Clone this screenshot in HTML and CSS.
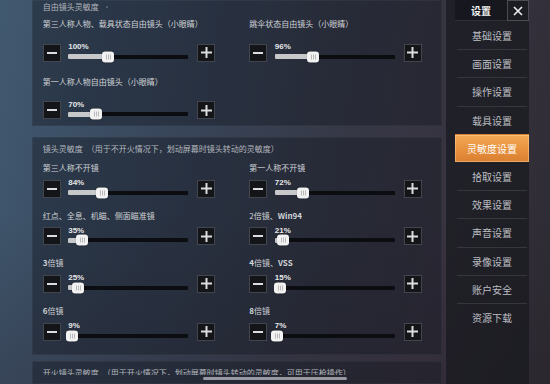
FILE: index.html
```html
<!DOCTYPE html>
<html lang="zh-CN">
<head>
<meta charset="utf-8">
<title>灵敏度设置</title>
<link rel="stylesheet" href="styles.css">
</head>
<body>
<div class="screen">
  <main class="content">
    <section class="panel panel-free">
      <div class="panel-title">自由镜头灵敏度<span class="dot"></span></div>
      <div class="grid">
        <div class="item">
          <div class="label">第三人称人物、载具状态自由镜头（小眼睛）</div>
          <div class="ctrl">
            <div class="step"><svg viewBox="0 0 10 10" width="10" height="10"><rect y="4" width="10" height="2"/></svg></div>
            <div class="slider" style="--p:33.3%"><span class="pct">100%</span><div class="track"><div class="fill"></div><div class="knob"></div></div></div>
            <div class="step"><svg viewBox="0 0 11 11" width="11" height="11"><rect y="4.5" width="11" height="2"/><rect x="4.5" width="2" height="11"/></svg></div>
          </div>
        </div>
        <div class="item">
          <div class="label">跳伞状态自由镜头（小眼睛）</div>
          <div class="ctrl">
            <div class="step"><svg viewBox="0 0 10 10" width="10" height="10"><rect y="4" width="10" height="2"/></svg></div>
            <div class="slider" style="--p:32%"><span class="pct">96%</span><div class="track"><div class="fill"></div><div class="knob"></div></div></div>
            <div class="step"><svg viewBox="0 0 11 11" width="11" height="11"><rect y="4.5" width="11" height="2"/><rect x="4.5" width="2" height="11"/></svg></div>
          </div>
        </div>
        <div class="item">
          <div class="label">第一人称人物自由镜头（小眼睛）</div>
          <div class="ctrl">
            <div class="step"><svg viewBox="0 0 10 10" width="10" height="10"><rect y="4" width="10" height="2"/></svg></div>
            <div class="slider" style="--p:23.3%"><span class="pct">70%</span><div class="track"><div class="fill"></div><div class="knob"></div></div></div>
            <div class="step"><svg viewBox="0 0 11 11" width="11" height="11"><rect y="4.5" width="11" height="2"/><rect x="4.5" width="2" height="11"/></svg></div>
          </div>
        </div>
      </div>
    </section>

    <section class="panel panel-lens">
      <div class="panel-title">镜头灵敏度<span class="note">（用于不开火情况下，划动屏幕时镜头转动的灵敏度）</span></div>
      <div class="grid">
        <div class="item">
          <div class="label">第三人称不开镜</div>
          <div class="ctrl">
            <div class="step"><svg viewBox="0 0 10 10" width="10" height="10"><rect y="4" width="10" height="2"/></svg></div>
            <div class="slider" style="--p:28%"><span class="pct">84%</span><div class="track"><div class="fill"></div><div class="knob"></div></div></div>
            <div class="step"><svg viewBox="0 0 11 11" width="11" height="11"><rect y="4.5" width="11" height="2"/><rect x="4.5" width="2" height="11"/></svg></div>
          </div>
        </div>
        <div class="item">
          <div class="label">第一人称不开镜</div>
          <div class="ctrl">
            <div class="step"><svg viewBox="0 0 10 10" width="10" height="10"><rect y="4" width="10" height="2"/></svg></div>
            <div class="slider" style="--p:23.5%"><span class="pct">72%</span><div class="track"><div class="fill"></div><div class="knob"></div></div></div>
            <div class="step"><svg viewBox="0 0 11 11" width="11" height="11"><rect y="4.5" width="11" height="2"/><rect x="4.5" width="2" height="11"/></svg></div>
          </div>
        </div>
        <div class="item">
          <div class="label">红点、全息、机瞄、侧面瞄准镜</div>
          <div class="ctrl">
            <div class="step"><svg viewBox="0 0 10 10" width="10" height="10"><rect y="4" width="10" height="2"/></svg></div>
            <div class="slider" style="--p:11.5%"><span class="pct">35%</span><div class="track"><div class="fill"></div><div class="knob"></div></div></div>
            <div class="step"><svg viewBox="0 0 11 11" width="11" height="11"><rect y="4.5" width="11" height="2"/><rect x="4.5" width="2" height="11"/></svg></div>
          </div>
        </div>
        <div class="item">
          <div class="label">2倍镜、<b>Win94</b></div>
          <div class="ctrl">
            <div class="step"><svg viewBox="0 0 10 10" width="10" height="10"><rect y="4" width="10" height="2"/></svg></div>
            <div class="slider" style="--p:6.5%"><span class="pct">21%</span><div class="track"><div class="fill"></div><div class="knob"></div></div></div>
            <div class="step"><svg viewBox="0 0 11 11" width="11" height="11"><rect y="4.5" width="11" height="2"/><rect x="4.5" width="2" height="11"/></svg></div>
          </div>
        </div>
        <div class="item">
          <div class="label"><b>3</b>倍镜</div>
          <div class="ctrl">
            <div class="step"><svg viewBox="0 0 10 10" width="10" height="10"><rect y="4" width="10" height="2"/></svg></div>
            <div class="slider" style="--p:8.3%"><span class="pct">25%</span><div class="track"><div class="fill"></div><div class="knob"></div></div></div>
            <div class="step"><svg viewBox="0 0 11 11" width="11" height="11"><rect y="4.5" width="11" height="2"/><rect x="4.5" width="2" height="11"/></svg></div>
          </div>
        </div>
        <div class="item">
          <div class="label"><b>4</b>倍镜、<b>VSS</b></div>
          <div class="ctrl">
            <div class="step"><svg viewBox="0 0 10 10" width="10" height="10"><rect y="4" width="10" height="2"/></svg></div>
            <div class="slider" style="--p:4.5%"><span class="pct">15%</span><div class="track"><div class="fill"></div><div class="knob"></div></div></div>
            <div class="step"><svg viewBox="0 0 11 11" width="11" height="11"><rect y="4.5" width="11" height="2"/><rect x="4.5" width="2" height="11"/></svg></div>
          </div>
        </div>
        <div class="item">
          <div class="label"><b>6</b>倍镜</div>
          <div class="ctrl">
            <div class="step"><svg viewBox="0 0 10 10" width="10" height="10"><rect y="4" width="10" height="2"/></svg></div>
            <div class="slider" style="--p:3%"><span class="pct">9%</span><div class="track"><div class="fill"></div><div class="knob"></div></div></div>
            <div class="step"><svg viewBox="0 0 11 11" width="11" height="11"><rect y="4.5" width="11" height="2"/><rect x="4.5" width="2" height="11"/></svg></div>
          </div>
        </div>
        <div class="item">
          <div class="label"><b>8</b>倍镜</div>
          <div class="ctrl">
            <div class="step"><svg viewBox="0 0 10 10" width="10" height="10"><rect y="4" width="10" height="2"/></svg></div>
            <div class="slider" style="--p:2.2%"><span class="pct">7%</span><div class="track"><div class="fill"></div><div class="knob"></div></div></div>
            <div class="step"><svg viewBox="0 0 11 11" width="11" height="11"><rect y="4.5" width="11" height="2"/><rect x="4.5" width="2" height="11"/></svg></div>
          </div>
        </div>
      </div>
    </section>

    <section class="panel panel-fire">
      <div class="panel-title cut">开火镜头灵敏度<span class="note">（用于开火情况下，划动屏幕时镜头转动的灵敏度，可用于压枪操作）</span></div>
    </section>
  </main>

  <aside class="sidebar">
    <div class="sb-head">
      <div class="sb-title">设置</div>
      <div class="sb-close"><svg viewBox="0 0 10 10" width="10" height="10"><path d="M1 1L9 9M9 1L1 9" stroke="#f0f0f0" stroke-width="1.6" fill="none"/></svg></div>
    </div>
    <nav class="nav">
      <div class="nav-item">基础设置</div>
      <div class="nav-item">画面设置</div>
      <div class="nav-item">操作设置</div>
      <div class="nav-item">载具设置</div>
      <div class="nav-item active">灵敏度设置</div>
      <div class="nav-item">拾取设置</div>
      <div class="nav-item">效果设置</div>
      <div class="nav-item">声音设置</div>
      <div class="nav-item">录像设置</div>
      <div class="nav-item">账户安全</div>
      <div class="nav-item">资源下载</div>
    </nav>
  </aside>
</div>
<div class="home-bar"></div>
</body>
</html>
```

FILE: styles.css
```css
* { box-sizing: border-box; margin: 0; padding: 0; }

html, body {
  width: 550px;
  height: 384px;
  overflow: hidden;
}

body {
  position: relative;
  font-family: "Noto Sans CJK SC", "Noto Sans", sans-serif;
  color: #d0d3d7;
  background:
    linear-gradient(180deg, rgba(0,0,0,0) 55%, rgba(40,30,40,0.25) 100%),
    linear-gradient(100deg, #41596f 0%, #3c5066 14%, #384458 35%, #363846 60%, #383340 80%, #2c2a31 100%);
}

.screen {
  display: flex;
  height: 384px;
}

.content {
  width: 446px;
  height: 384px;
  padding-left: 32px;
  padding-right: 4px;
  display: flex;
  flex-direction: column;
  overflow: hidden;
}

.panel {
  background: rgba(20, 24, 33, 0.42);
  box-shadow: inset 0 0 0 1px rgba(255, 255, 255, 0.04);
  padding-left: 10.7px;
  flex-shrink: 0;
}

.panel-title {
  font-size: 8px;
  line-height: 12px;
  height: 12px;
  color: #b3b7bd;
  white-space: nowrap;
  display: flex;
  align-items: center;
}

.dot {
  width: 2px;
  height: 2px;
  border-radius: 50%;
  background: rgba(255, 255, 255, 0.25);
  margin-left: 7px;
}

.note { margin-left: 4px; }

.grid {
  display: grid;
  grid-template-columns: 206.6px 190px;
}

.label {
  font-size: 8px;
  line-height: 12px;
  height: 12px;
  color: #d0d3d7;
  white-space: nowrap;
}

.label b { font-weight: 700; }

.ctrl {
  display: flex;
  align-items: flex-start;
  height: 18px;
}

.step {
  width: 18px;
  height: 18px;
  flex-shrink: 0;
  background: #131519;
  border: 1px solid #42464c;
  display: flex;
  align-items: center;
  justify-content: center;
}

.step svg { fill: #dcdcdc; display: block; }

.slider {
  width: 120px;
  margin-left: 7.5px;
  margin-right: 9px;
  display: flex;
  flex-direction: column;
}

.pct {
  font-family: "Liberation Sans", Arial, sans-serif;
  font-weight: 700;
  font-size: 8px;
  line-height: 8px;
  height: 8px;
  margin-top: -0.5px;
  color: #e6e7e8;
}

.track {
  position: relative;
  height: 4px;
  margin-top: 3.5px;
  background: #0c0d10;
  border-radius: 1px;
}

.fill {
  position: absolute;
  left: 0;
  top: -0.5px;
  height: 5px;
  width: var(--p);
  background: #c6c8ca;
  border-radius: 1px;
}

.knob {
  position: absolute;
  left: var(--p);
  top: 50%;
  width: 12px;
  height: 11px;
  transform: translate(-50%, -50%);
  background: #f2f2f2;
  border-radius: 3px;
  box-shadow: 0 0 1px rgba(0, 0, 0, 0.5);
}

.knob::after {
  content: "";
  position: absolute;
  left: 4px;
  top: 3px;
  width: 5px;
  height: 5px;
  background: repeating-linear-gradient(90deg, #b8b8b8 0 1px, transparent 1px 2px);
}

/* panel 1 */
.panel-free {
  padding-top: 1px;
  padding-bottom: 7px;
}
.panel-free .grid {
  margin-top: 5px;
  row-gap: 14px;
}
.panel-free .label { margin-bottom: 13.5px; }

/* panel 2 */
.panel-lens {
  margin-top: 11px;
  padding-top: 6px;
  padding-bottom: 14.4px;
}
.panel-lens .grid {
  margin-top: 7px;
  row-gap: 12.2px;
}
.panel-lens .label { margin-bottom: 5.5px; }

/* panel 3 */
.panel-fire {
  margin-top: 6.5px;
  padding-top: 6px;
  flex-grow: 1;
}
.panel-title.cut {
  height: 7.5px;
  overflow: hidden;
  align-items: flex-start;
}

/* sidebar */
.sidebar {
  width: 83px;
  height: 384px;
  padding-left: 9px;
  background: rgba(24, 25, 30, 0.72);
  flex-shrink: 0;
}

.sb-head {
  display: flex;
  height: 21px;
  border-bottom: 1px solid #2f3035;
}

.sb-title {
  width: 52px;
  text-align: center;
  font-size: 10px;
  line-height: 21px;
  font-weight: 700;
  color: #f2f2f2;
  background: rgba(10, 11, 14, 0.35);
}

.sb-close {
  width: 22px;
  height: 21px;
  background: #1c1d22;
  border: 1px solid #4b4d53;
  display: flex;
  align-items: center;
  justify-content: center;
}

.sb-close svg { display: block; }

.nav {
  display: flex;
  flex-direction: column;
}

.nav-item {
  height: 28.2px;
  margin: 0 2px;
  border-top: 1px solid #36373d;
  display: flex;
  align-items: center;
  justify-content: center;
  font-size: 10px;
  color: #bdbfc3;
}

.nav-item:first-child { border-top-color: transparent; }

.nav-item.active {
  margin: 0;
  border-top-color: transparent;
  color: #ffffff;
  background: linear-gradient(180deg, #f3a957 0%, #e8933f 50%, #d97f31 100%);
  box-shadow: inset 0 0 0 1px rgba(255, 214, 160, 0.45);
}

.nav-item.active + .nav-item { border-top-color: transparent; }

.home-bar {
  position: absolute;
  left: 203px;
  top: 377px;
  width: 144px;
  height: 3px;
  border-radius: 2px;
  background: rgba(190, 190, 198, 0.75);
}
```
